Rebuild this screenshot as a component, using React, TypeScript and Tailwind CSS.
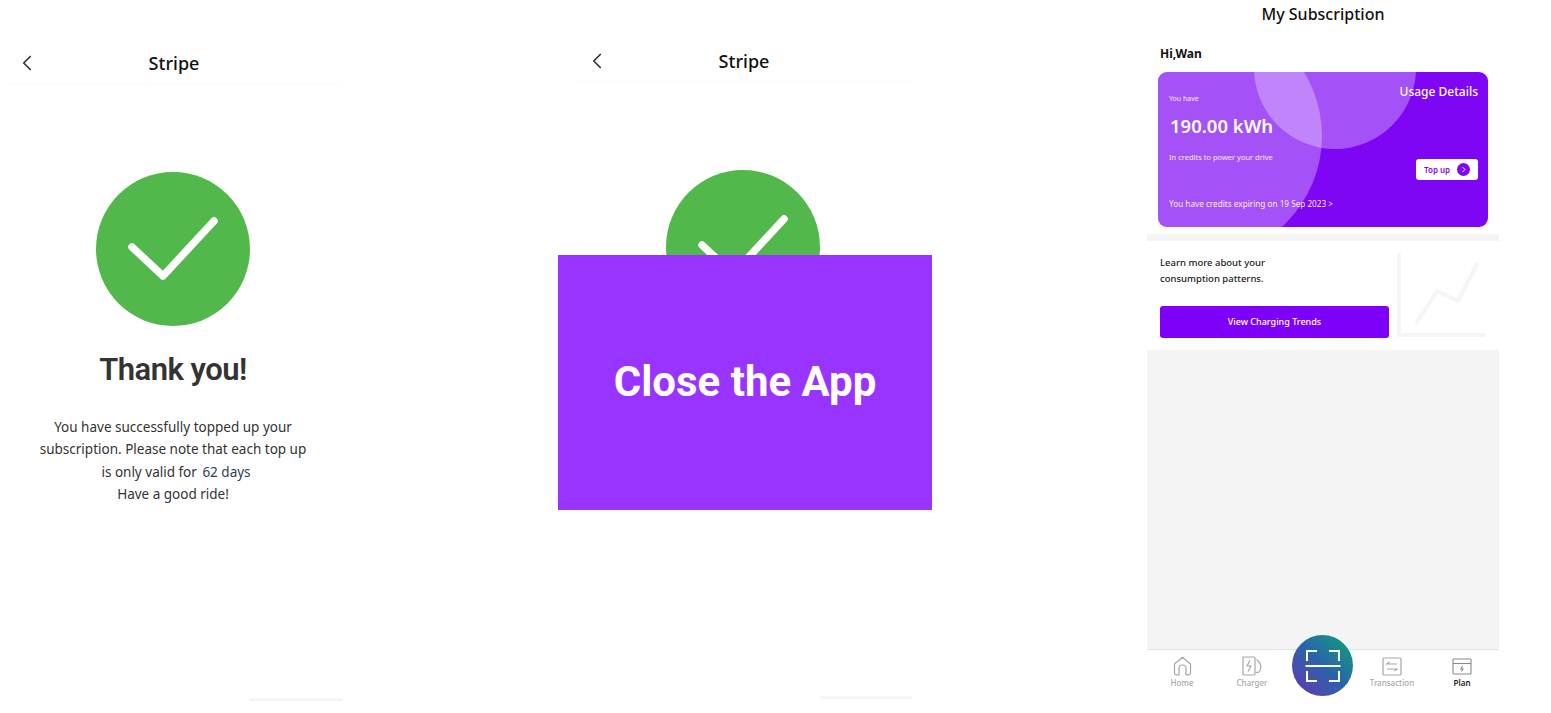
import { ChevronLeft } from "lucide-react";

function StripeScreen({ className, covered }: { className: string; covered?: boolean }) {
  return (
    <div className={`flex h-[713px] w-[346px] shrink-0 flex-col items-center ${className}`}>
      {/* Header */}
      <div className="relative flex h-[84px] w-[332px] items-end justify-center self-start ml-2 border-b border-[#fafafa] pb-[6px]">
        <ChevronLeft className="absolute left-[6px] top-[50px] h-[26px] w-[26px] text-[#333333]" strokeWidth={1.6} />
        <span className="text-[18px] font-medium leading-[28px] text-[#111111]">Stripe</span>
      </div>

      <div className="mt-[88px] flex h-[154px] w-[154px] items-center justify-center rounded-full bg-[#52b84b]">
        <svg width="154" height="154" viewBox="0 0 154 154" fill="none">
          <path d="M36 75 L67 104 L118 49" stroke="white" strokeWidth="7.5" strokeLinecap="round" strokeLinejoin="round" />
        </svg>
      </div>

      {/* The purple overlay hides this copy on the second screen */}
      {!covered && (
        <>
          <h1 className="mt-[22px] font-['Roboto',sans-serif] text-[31px] font-semibold leading-[44px] tracking-[-0.5px] text-[#333333]">Thank you!</h1>

          <div className="mt-[24px] w-[300px] text-center text-[13.5px] leading-[22.4px] text-[#333333]">
            <p>You have successfully topped up your</p>
            <p>subscription. Please note that each top up</p>
            <p className="pl-[6px]">
              is only valid for <span className="ml-[2px] text-[#2b3f55]">62 days</span>
            </p>
            <p>Have a good ride!</p>
          </div>
        </>
      )}

      <div className="mb-[12px] mr-[4px] mt-auto h-[3px] w-[92px] self-end bg-[#f5f5f5]" />
    </div>
  );
}

function NavItem({ label, active, children }: { label: string; active?: boolean; children: React.ReactNode }) {
  return (
    <div className="flex w-[70px] flex-col items-center">
      <div className="flex h-[24px] items-center justify-center">{children}</div>
      <span className={`text-[8px] leading-[10px] ${active ? "font-semibold text-[#222222]" : "font-medium text-[#a8a8a8]"}`}>
        {label}
      </span>
    </div>
  );
}

function Subscription() {
  return (
    <div className="flex h-[713px] w-[352px] shrink-0 flex-col">
      <div className="flex h-[28px] items-center justify-center text-[16px] font-medium text-[#111111]">My Subscription</div>
      <div className="ml-[13px] mt-[18px] text-[12px] font-bold leading-[16px] text-[#111111]">Hi,Wan</div>

      {/* Credit card */}
      <div className="relative ml-[11px] mt-[10px] h-[155px] w-[330px] overflow-hidden rounded-[9px] bg-[#7f06f5] text-white">
        <div className="absolute left-[-82px] top-[-59px] h-[246px] w-[246px] rounded-full bg-white/30" />
        <div className="absolute left-[96px] top-[-85px] h-[162px] w-[162px] rounded-full bg-white/30" />
        <div className="relative flex h-full flex-col pl-[11px] pr-[10px]">
          <div className="flex items-start justify-between pt-[12px]">
            <span className="pt-[10px] text-[7px] leading-[10px] text-white/90">You have</span>
            <span className="text-[12px] font-medium leading-[16px]">Usage Details</span>
          </div>
          <div className="ml-[1px] mt-[10px] text-[18.5px] font-semibold leading-[24px]">190.00 kWh</div>
          <div className="mt-[14px] text-[7.5px] leading-[10px] text-white/90">In credits to power your drive</div>
          <div className="-mt-[3px] flex justify-end">
            <div className="flex h-[21px] w-[62px] items-center justify-between rounded-[3px] bg-white pl-[8px] pr-[8px]">
              <span className="text-[8px] font-semibold text-[#7f06f5]">Top up</span>
              <span className="flex h-[13px] w-[13px] items-center justify-center rounded-full bg-[#7f06f5]">
                <svg width="7" height="7" viewBox="0 0 7 7" fill="none">
                  <path d="M2.5 1 L5 3.5 L2.5 6" stroke="white" strokeWidth="1" />
                </svg>
              </span>
            </div>
          </div>
          <div className="mt-[18px] text-[8.2px] leading-[12px] text-white/95">You have credits expiring on 19 Sep 2023 &gt;</div>
        </div>
      </div>

      <div className="mt-[7px] h-[7px] bg-[#f4f4f4]" />

      {/* Trends */}
      <div className="flex h-[109px] bg-white pl-[13px]">
        <div className="flex w-[229px] flex-col">
          <div className="mt-[14px] text-[9.5px] font-medium leading-[16px] text-[#222222]">
            <p>Learn more about your</p>
            <p>consumption patterns.</p>
          </div>
          <div className="mt-[19px] flex h-[32px] items-center justify-center rounded-[3px] bg-[#7f00f9] text-[9px] font-medium text-white">
            View Charging Trends
          </div>
        </div>
        <svg className="ml-[7px] mt-[12px]" width="92" height="86" viewBox="0 0 92 86" fill="none" stroke="#f5f5f5" strokeWidth="4" strokeLinecap="round" strokeLinejoin="round">
          <path d="M3 2 V82 H88" />
          <path d="M21 69 L41 38 L62 48 L81 11" />
        </svg>
      </div>

      <div className="flex-1 bg-[#f4f4f4]" />

      {/* Bottom nav */}
      <div className="relative flex h-[64px] items-start justify-between border-t border-[#e2e2e2] bg-white pl-0 pr-[2px] pt-[4px]">
        <NavItem label="Home">
          <svg width="19" height="20" viewBox="0 0 19 20" fill="none" stroke="#a6a6a6" strokeWidth="1.2">
            <path d="M1.5 8 L9.5 1.2 L17.5 8 V17 Q17.5 18.8 15.7 18.8 H13 V12.5 A3.5 3.5 0 0 0 6 12.5 V18.8 H3.3 Q1.5 18.8 1.5 17 Z" strokeLinejoin="round" />
          </svg>
        </NavItem>
        <NavItem label="Charger">
          <svg width="20" height="20" viewBox="0 0 20 20" fill="none" stroke="#a6a6a6" strokeWidth="1.2">
            <rect x="1" y="1" width="12" height="18" rx="1" />
            <path d="M8 4.5 L5 10 H9 L6 15.5" />
            <path d="M14.5 3.5 C18 6 19.5 9 18.5 13 C18 16.5 15.5 17 14 16" />
          </svg>
        </NavItem>
        <div className="w-[70px]" />
        <NavItem label="Transaction">
          <svg width="20" height="19" viewBox="0 0 20 19" fill="none" stroke="#a6a6a6" strokeWidth="1.2">
            <rect x="1" y="1" width="18" height="17" rx="1" />
            <path d="M15 7 H5 L7.5 5 M5 12 H15 L12.5 14" />
          </svg>
        </NavItem>
        <NavItem label="Plan" active>
          <svg width="20" height="17" viewBox="0 0 20 17" fill="none" stroke="#8a8a8a" strokeWidth="1.1">
            <rect x="1" y="1" width="18" height="15" rx="1" />
            <path d="M1 5.5 H19" />
            <path d="M10.5 8 L8.8 11 H11 L9.5 13.5" />
          </svg>
        </NavItem>

        <div className="absolute left-[145px] top-[-15px] flex h-[61px] w-[61px] items-center justify-center rounded-full bg-gradient-to-tr from-[#5a2fb8] via-[#2a62a8] to-[#12a36e]">
          <svg width="36" height="32" viewBox="0 0 36 32" fill="none" stroke="white" strokeWidth="2">
            <path d="M2 11 V1 H12 M24 1 H34 V11 M2 21 V31 H12 M24 31 H34 V21" />
            <path d="M0.5 16 H35.5" />
          </svg>
        </div>
      </div>
    </div>
  );
}

export default function App() {
  return (
    <div className="relative flex h-[713px] w-[1551px] overflow-hidden bg-white font-['Noto_Sans',sans-serif]">
      <StripeScreen className="" />
      <StripeScreen className="-mt-[2px] ml-[224px]" covered />
      <div className="ml-[231px]">
        <Subscription />
      </div>

      <div className="absolute left-[558px] top-[255px] flex h-[255px] w-[374px] items-center justify-center bg-[#9933ff] pb-[2px]">
        <span className="font-['Roboto',sans-serif] text-[42px] font-bold text-white">Close the App</span>
      </div>
    </div>
  );
}
